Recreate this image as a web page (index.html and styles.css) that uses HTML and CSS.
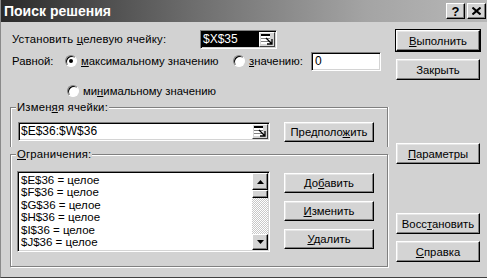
FILE: index.html
```html
<!DOCTYPE html>
<html lang="ru">
<head>
<meta charset="utf-8">
<title>Поиск решения</title>
<link rel="stylesheet" href="styles.css">
</head>
<body>
<div class="dialog">
  <div class="titlebar">
    <span class="title">Поиск решения</span>
    <div class="tbtns">
      <span class="tbtn">?</span>
      <span class="tbtn"><svg width="9" height="8" viewBox="0 0 9 8"><path d="M0.5 0.5 L8.5 7.5 M8.5 0.5 L0.5 7.5" stroke="#000" stroke-width="2"/></svg></span>
    </div>
  </div>
  <div class="content">
    <div class="left">
      <div class="row r1">
        <span class="lbl target-lbl">Установить <u>ц</u>елевую ячейку:</span>
        <div class="refedit target">
          <span class="field sel">$X$35</span>
          <span class="refbtn"><svg width="12" height="11" viewBox="0 0 12 11"><rect x="0" y="0" width="9" height="2" fill="#000"/><rect x="0" y="2" width="9" height="8" fill="#fff"/><path d="M0 4.5H9M0 7.5H9" stroke="#808080"/><path d="M5 4 L11 10 M6 10 H11 V5" stroke="#000" stroke-width="1.3" fill="none"/></svg></span>
        </div>
      </div>
      <div class="row r2">
        <span class="lbl eq-lbl">Равной:</span>
        <span class="opt opt-max"><span class="radio on"></span><span><u>м</u>аксимальному значению</span></span>
        <span class="opt opt-val"><span class="radio"></span><span><u>з</u>начению:</span></span>
        <span class="box valbox">0</span>
      </div>
      <div class="row r3">
        <span class="opt"><span class="radio"></span><span>ми<u>н</u>имальному значению</span></span>
      </div>
      <fieldset class="group g1">
        <legend>Измен<u>я</u>я ячейки:</legend>
        <div class="grow">
          <div class="refedit cells">
            <span class="field">$E$36:$W$36</span>
            <span class="refbtn"><svg width="12" height="11" viewBox="0 0 12 11"><rect x="0" y="0" width="9" height="2" fill="#000"/><rect x="0" y="2" width="9" height="8" fill="#fff"/><path d="M0 4.5H9M0 7.5H9" stroke="#808080"/><path d="M5 4 L11 10 M6 10 H11 V5" stroke="#000" stroke-width="1.3" fill="none"/></svg></span>
          </div>
          <button class="btn">Предполо<u>ж</u>ить</button>
        </div>
      </fieldset>
      <fieldset class="group g2">
        <legend><u>О</u>граничения:</legend>
        <div class="crow">
          <div class="listbox">
            <ul class="items">
              <li>$E$36 = целое</li>
              <li>$F$36 = целое</li>
              <li>$G$36 = целое</li>
              <li>$H$36 = целое</li>
              <li>$I$36 = целое</li>
              <li>$J$36 = целое</li>
            </ul>
            <div class="sbar">
              <span class="sbtn up"><svg width="7" height="4" viewBox="0 0 7 4"><polygon points="3.5,0 7,4 0,4" fill="#000"/></svg></span>
              <span class="thumb"></span>
              <span class="track"></span>
              <span class="sbtn down"><svg width="7" height="4" viewBox="0 0 7 4"><polygon points="0,0 7,0 3.5,4" fill="#000"/></svg></span>
            </div>
          </div>
          <div class="cbtns">
            <button class="btn">До<u>б</u>авить</button>
            <button class="btn"><u>И</u>зменить</button>
            <button class="btn"><u>У</u>далить</button>
          </div>
        </div>
      </fieldset>
    </div>
    <div class="right">
      <button class="btn rbtn default"><u>В</u>ыполнить</button>
      <button class="btn rbtn close">Закрыть</button>
      <button class="btn rbtn params"><u>П</u>араметры</button>
      <button class="btn rbtn reset">Восс<u>т</u>ановить</button>
      <button class="btn rbtn help"><u>С</u>правка</button>
    </div>
  </div>
</div>
</body>
</html>
```

FILE: styles.css
```css
* { box-sizing: border-box; }
html, body { margin: 0; padding: 0; }
body {
  font-family: "Liberation Sans", Arial, sans-serif;
  font-size: 11.3px;
  color: #000;
  background: #d4d4d4;
}
.dialog {
  width: 487px;
  height: 278px;
  background: #d2d2d2;
  border-bottom: 1px solid #404040;
  border-left: 1px solid #8a8a8a;
  overflow: hidden;
}
.titlebar {
  height: 22px;
  display: flex;
  align-items: center;
  justify-content: space-between;
  background: linear-gradient(90deg, #2a2a2a 0%, #6e6e6e 40%, #a4a4a4 75%, #b8b8b8 100%);
  padding: 0 1px 0 3px;
}
.title {
  color: #fff;
  font-weight: bold;
  font-size: 14px;
  line-height: 22px;
}
.tbtns { display: flex; gap: 2px; }
.tbtn {
  width: 19px;
  height: 16px;
  display: flex;
  align-items: center;
  justify-content: center;
  background: #d4d4d4;
  border: 1px solid;
  border-color: #fff #000 #000 #fff;
  box-shadow: inset -1px -1px 0 #808080;
  font-weight: bold;
  font-size: 13px;
}
.content {
  display: flex;
  padding: 7px 0 0 9px;
}
.left { width: 378px; }
.row { display: flex; align-items: center; }
.r1 { height: 20px; padding-left: 2px; }
.target-lbl { width: 188px; letter-spacing: 0.2px; }
.refedit {
  display: flex;
  height: 19px;
  background: #fff;
  border: 1px solid;
  border-color: #808080 #fff #fff #808080;
  padding: 1px;
  box-shadow: inset 1px 1px 0 #000, inset -1px -1px 0 #d4d4d4;
}
.field {
  flex: 1;
  line-height: 15px;
  padding-left: 1px;
  white-space: nowrap;
  font-size: 12px;
}
.field.sel { background: #000; color: #fff; }
.target { width: 77px; }
.refbtn {
  width: 16px;
  height: 15px;
  display: flex;
  align-items: center;
  justify-content: center;
  background: #d4d4d4;
  border: 1px solid;
  border-color: #fff #404040 #404040 #fff;
}
.r2 { margin-top: 2px; height: 20px; padding-left: 2px; }
.eq-lbl { width: 53px; }
.opt { display: flex; align-items: center; gap: 4px; }
.opt-max { width: 168px; }
.opt-val { width: 78px; }
.radio {
  width: 12px;
  height: 12px;
  border-radius: 50%;
  background: #fff;
  border: 1px solid;
  border-color: #808080 #fff #fff #808080;
  box-shadow: inset 1px 1px 0 #000;
  display: flex;
  align-items: center;
  justify-content: center;
  flex: none;
}
.radio.on::after {
  content: "";
  width: 4px;
  height: 4px;
  border-radius: 50%;
  background: #000;
}
.box {
  height: 19px;
  background: #fff;
  border: 1px solid;
  border-color: #808080 #fff #fff #808080;
  box-shadow: inset 1px 1px 0 #000, inset -1px -1px 0 #d4d4d4;
  padding-left: 3px;
  line-height: 17px;
  font-size: 12px;
}
.valbox { width: 70px; }
.r3 { margin-top: 12px; height: 16px; padding-left: 57px; }
.group {
  margin: 0;
  border: 1px solid #808080;
  box-shadow: inset 1px 1px 0 #fff, 1px 0 0 #fff;
  min-width: 0;
}
.group legend {
  padding: 0 1px;
  margin-left: -1px;
  line-height: 14px;
  height: 14px;
  background: #d2d2d2;
  letter-spacing: 0.2px;
}
.g1 {
  margin-top: 1px;
  border-bottom: none;
  padding: 7px 0 5px 6px;
}
.grow { display: flex; align-items: center; height: 21px; margin-left: 1px; }
.cells { width: 252px; }
.btn {
  font-family: inherit;
  font-size: 11.3px;
  color: #000;
  background: #d4d4d4;
  border: 1px solid;
  border-color: #fff #000 #000 #fff;
  box-shadow: inset -1px -1px 0 #808080, inset 1px 1px 0 #e6e6e6;
  padding: 0;
  margin: 0;
  width: 90px;
  height: 20px;
  line-height: 16px;
}
.grow .btn { margin-left: 14px; }
.g2 {
  padding: 10px 0 14px 6px;
  box-shadow: inset 1px 1px 0 #fff, 1px 1px 0 #fff;
}
.crow { display: flex; align-items: flex-start; }
.listbox {
  width: 253px;
  height: 81px;
  display: flex;
  background: #fff;
  border: 1px solid;
  border-color: #808080 #fff #fff #808080;
  padding: 1px;
  box-shadow: inset 1px 1px 0 #000, inset -1px -1px 0 #d4d4d4;
}
.items {
  list-style: none;
  margin: 0;
  padding: 1px 0 0 2px;
  flex: 1;
  overflow: hidden;
  line-height: 12.4px;
  font-size: 11.5px;
}
.items li { white-space: nowrap; }
.sbar {
  width: 16px;
  display: flex;
  flex-direction: column;
}
.sbtn, .thumb {
  display: flex;
  align-items: center;
  justify-content: center;
  background: #d4d4d4;
  border: 1px solid;
  border-color: #fff #000 #000 #fff;
  box-shadow: inset -1px -1px 0 #808080;
}
.sbtn.up { height: 17px; }
.thumb { height: 8px; }
.track {
  flex: 1;
  background-color: #fff;
  background-image: conic-gradient(#c8c8c8 25%, #fff 0 50%, #c8c8c8 0 75%, #fff 0);
  background-size: 2px 2px;
}
.sbtn.down { height: 16px; }
.cbtns {
  display: flex;
  flex-direction: column;
  gap: 8px;
  margin: 2px 0 0 14px;
}
.right {
  display: flex;
  flex-direction: column;
  margin-left: 8px;
}
.rbtn { width: 84px; height: 21px; }
.default {
  margin-top: 1px;
  box-shadow: 0 0 0 1px #000, inset -1px -1px 0 #808080, inset 1px 1px 0 #e6e6e6;
}
.close { margin-top: 8px; }
.params { margin-top: 63px; }
.reset { margin-top: 49px; }
.help { margin-top: 7px; }
```
